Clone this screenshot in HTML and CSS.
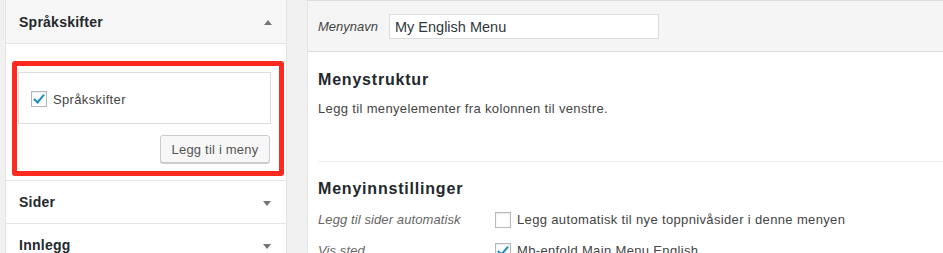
FILE: index.html
```html
<!DOCTYPE html>
<html lang="nb">
<head>
    <meta charset="UTF-8">
    <title>Menyer</title>
    <link rel="stylesheet" href="styles.css">
</head>
<body>

<div class="wrap">
    <!-- Left column: accordion of items to add -->
    <div class="side">
        <div class="section open">
            <div class="section-title">
                <span>Språkskifter</span>
                <span class="arrow up"></span>
            </div>
            <div class="section-body">
                <div class="highlight">
                    <div class="items">
                        <label class="check-row">
                            <span class="box checked"></span>
                            Språkskifter
                        </label>
                    </div>
                    <div class="actions">
                        <button class="btn">Legg til i meny</button>
                    </div>
                </div>
            </div>
        </div>
        <div class="section">
            <div class="section-title">
                <span>Sider</span>
                <span class="arrow down"></span>
            </div>
        </div>
        <div class="section">
            <div class="section-title">
                <span>Innlegg</span>
                <span class="arrow down"></span>
            </div>
        </div>
    </div>

    <!-- Right column: menu editor -->
    <div class="editor">
        <div class="editor-head">
            <span class="field-label">Menynavn</span>
            <input class="menu-name" type="text" value="My English Menu">
        </div>
        <div class="editor-body">
            <h3>Menystruktur</h3>
            <p>Legg til menyelementer fra kolonnen til venstre.</p>
            <hr class="divider">
            <h3 class="settings-title">Menyinnstillinger</h3>
            <div class="setting">
                <span class="setting-label">Legg til sider automatisk</span>
                <label class="check-row">
                    <span class="box"></span>
                    Legg automatisk til nye toppnivåsider i denne menyen
                </label>
            </div>
            <div class="setting">
                <span class="setting-label">Vis sted</span>
                <label class="check-row">
                    <span class="box checked"></span>
                    Mb-enfold Main Menu English
                </label>
            </div>
        </div>
    </div>
</div>

</body>
</html>
```

FILE: styles.css
```css
html, body {
    margin: 0;
    height: 100%;
    overflow: hidden;
}
body {
    background-color: #f1f1f1;
    font-family: "Liberation Sans", Arial, sans-serif;
    font-size: 13px;
    letter-spacing: 0.35px;
    color: #444;
}
.wrap {
    display: flex;
    align-items: flex-start;
    padding-left: 5px;
    gap: 20px;
}

/* left accordion */
.side {
    width: 280px;
    flex: none;
    border: 1px solid #e5e5e5;
    border-top: none;
    background-color: #fff;
}
.section {
    border-bottom: 1px solid #e5e5e5;
}
.section-title {
    height: 42px;
    display: flex;
    align-items: center;
    justify-content: space-between;
    padding: 0 14px 0 13px;
    font-size: 14px;
    font-weight: 600;
    letter-spacing: 0.25px;
    color: #23282d;
}
.open .section-title {
    background-color: #f7f7f7;
    border-bottom: 1px solid #e5e5e5;
    height: 43px;
}
.arrow {
    width: 0;
    height: 0;
    border-left: 4px solid transparent;
    border-right: 4px solid transparent;
}
.arrow.up {
    border-bottom: 5px solid #72777c;
    margin-top: 2px;
}
.arrow.down {
    border-top: 5px solid #72777c;
    margin-top: 2px;
    margin-right: 1px;
}
.section-body {
    padding: 17px 0 4px 6px;
}
.highlight {
    width: 272px;
    box-sizing: border-box;
    border: 5px solid #ff2a1f;
    border-radius: 3px;
    padding: 6px 8px 8px 1px;
}
.items {
    height: 52px;
    box-sizing: border-box;
    border: 1px solid #ddd;
    padding: 18px 12px 0;
}
.actions {
    display: flex;
    justify-content: flex-end;
    margin-top: 11px;
    padding-right: 1px;
}
.btn {
    height: 28px;
    width: 110px;
    padding: 0;
    font-family: inherit;
    font-size: 13px;
    letter-spacing: 0.2px;
    color: #555;
    background-color: #f7f7f7;
    border: 1px solid #ccc;
    border-radius: 3px;
    box-shadow: 0 1px 0 #ccc;
}

/* checkboxes */
.check-row {
    display: flex;
    align-items: center;
    gap: 6px;
    color: #444;
}
.box {
    width: 16px;
    height: 16px;
    box-sizing: border-box;
    border: 1px solid #b4b9be;
    background-color: #fff;
    box-shadow: inset 0 1px 2px rgba(0, 0, 0, 0.1);
    position: relative;
    flex: none;
}
.box.checked::after {
    content: "";
    position: absolute;
    left: 4px;
    top: 0px;
    width: 4px;
    height: 9px;
    border-right: 2px solid #1e8cbe;
    border-bottom: 2px solid #1e8cbe;
    transform: rotate(40deg);
}

/* right editor */
.editor {
    flex: 1;
    margin-right: -10px;
    background-color: #fff;
    border: 1px solid #e5e5e5;
    border-top-color: #ddd;
}
.editor-head {
    height: 50px;
    display: flex;
    align-items: center;
    gap: 11px;
    padding-left: 10px;
    background-color: #f5f5f5;
    border-bottom: 1px solid #ddd;
    letter-spacing: 0;
}
.field-label {
    font-style: italic;
    color: #444;
}
.menu-name {
    width: 270px;
    height: 25px;
    box-sizing: border-box;
    border: 1px solid #ddd;
    padding: 0 5px;
    font-family: inherit;
    font-size: 14.5px;
    color: #32373c;
    background-color: #fff;
    margin-top: 1px;
}
.editor-body {
    padding: 18px 0 0 10px;
}
h3 {
    margin: 0;
    font-size: 16px;
    font-weight: 600;
    letter-spacing: 0.8px;
    line-height: 20px;
    color: #23282d;
}
p {
    margin: 10px 0 0;
    line-height: 18px;
}
.divider {
    border: none;
    border-top: 1px solid #eee;
    margin: 43px 0 0;
}
.settings-title {
    margin-top: 17px;
}
.setting {
    display: flex;
    align-items: center;
    height: 31px;
}
.settings-title + .setting {
    margin-top: 5px;
}
.setting-label {
    width: 177px;
    font-style: italic;
    letter-spacing: 0.1px;
    color: #666;
}
```
